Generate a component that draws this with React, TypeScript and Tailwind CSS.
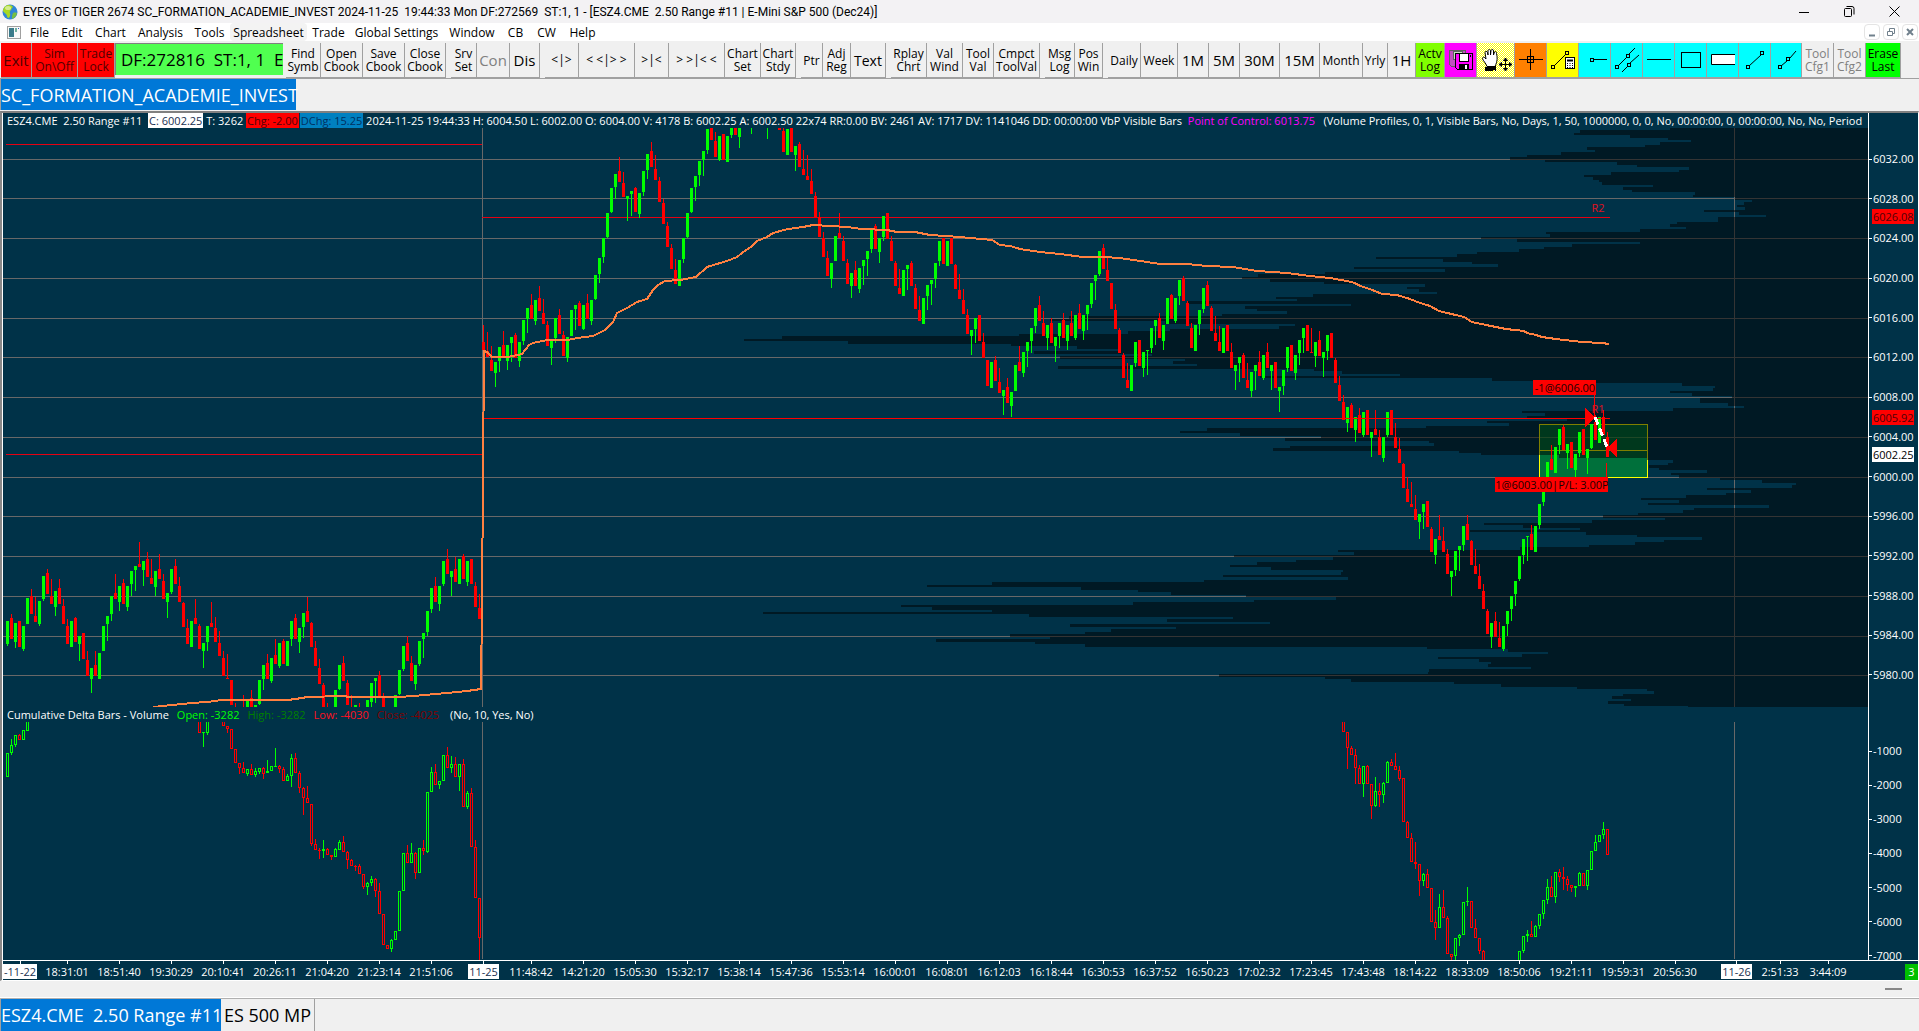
import React from "react";

const SERIES_A =
  "372,303 293,356 365,309 303,380 387,318 312,234 228,282 288,305 312,243 237,168 160,221 228,251 261,213 204,251 258,312 318,372 380,303 294,365 372,348 339,416 " +
  "420,467 476,444 435,467 476,399 392,318 312,288 282,228 219,237 245,198 189,251 261,198 192,153 151,138 132,141 150,123 117,171 174,192 200,153 147,177 183,237 " +
  "245,219 216,147 138,192 198,245 249,321 324,372 380,303 294,312 318,386 392,369 366,318 309,321 324,366 369,407 414,467 474,477 480,555 570,624 - 580,600 " +
  "600,540 534,585 600,555 552,480 477,435 429,477 483,414 405,432 438,369 363,432 438,363 357,303 294,357 366,324 321,279 273,305 309,380 384,437 444,492 494,565 " +
  "570,624 - 570,510 507,435 429,483 489,555 575,600 600,555 570,624 - 600,540 545,489 483,474 465,528 528,594 - - 590,525 521,450 447,378 " +
  "369,423 429,483 492,435 432,363 357,339 336,273 267,204 198,245 252,198 192,123 117,161 171,153 147,186 192,117 108,177 186,123 117,192 198,261 264,297";

const SERIES_B =
  "696,720 723,742 750,783 789,756 753,711 705,738 753,705 699,681 675,743 753,696 693,630 627,594 585,626 633,570 564,603 609,642 645,708 714,690 684,624 615,672 " +
  "675,738 744,681 678,600 597,585 579,648 657,585 579,627 633,570 567,495 492,444 441,384 381,309 306,234 231,192 183,216 219,261 267,258 252,243 234,306 312,249 " +
  "246,183 180,132 123,171 177,210 213,276 279,342 348,411 414,477 480,522 528,450 447,384 381,309 306,234 231,198 195,153 150,123 120,57 45,90 93,141 150,78 " +
  "72,150 156,78 75,10 30,75 81,40 - - 40,-3 - - - 45,12 - - 40,60 63,126 135,57 50,126 135,108 102,171 " +
  "177,195 198,210 213,252 258,321 321,381 384,441 444,498 507,459 453,378 369,384 393,453 459,522 528,489 480,528 537,474 468,450 447,423 417,354 348,417 426,384 " +
  "381,318 309,387 393,453 459,528 534,552 558,480 477,465 459,528 534,597 600,633 642,564 558,525 522,510 507,459 453,393 384,462 468,393 384,462 465,537 540,567";

const SERIES_C =
  "570,612 615,672 678,660 657,624 615,693 696,744 750,828 834,756 750,813 816,849 858,840 831,879 888,846 843,765 756,783 789,726 723,696 693,654 648,594 585,633 " +
  "639,678 684,645 639,699 708,681 678,639 630,684 693,645 639,678 684,615 609,657 663,615 612,585 582,519 513,495 492,423 414,477 480,513 519,597 600,657 660,729 " +
  "735,804 810,834 843,765 759,696 690,768 774,726 723,720 714,654 648,630 624,684 693,645 642,564 555,627 633,564 558,510 504,573 579,648 654,714 723,645 642,600 " +
  "597,534 525,588 594,663 669,693 696,723 729,654 645,723 726,774 783,765 759,741 735,804 810,834 843,786 783,765 756,798 804,735 726,774 783,765 756,834 843,831 " +
  "828,780 774,711 705,783 789,735 729,690 684,654 645,723 726,729 738,696 690,738 744,726 723,675 669,744 750,819 825,873 876,930";

const SERIES_D =
  "39,-9 -15,54 60,21 15,69 75,6 0,75 84,66 57,75 81,135 144,81 75,6 0,75 81,114 117,159 162,234 237,276 282,291 297,330 336,312 306,282 " +
  "273,351 357,426 435,387 378,390 393,426 432,492 501,483 480,423 420,408 405,348 342,390 393,465 468,492 498,537 543,597 603,672 681,639 633,681 684,711 717,648 " +
  "642,603 597,558 552,513 507,438 435,387 381,378 372,420 426,348 345,282 276,213 210,156 147,180 189,111 105,57 51,120 129,102 96,174 180,132 129,66 57,135 " +
  "144,117 114,42 36,90 99,21 21,75 81,141";

type Segment = { start: number; y0: number; data: string };

const PRICE: Segment[] = [
  { start: 0, y0: 520, data: SERIES_A },
  { start: 119, y0: 110, data: SERIES_B },
  { start: 239, y0: 110, data: SERIES_C },
  { start: 335, y0: 410, data: SERIES_D },
];

/* Each delta bar: colour, then high,top,bottom,low (or only top,bottom). */
const DELTA: Segment[] = [
  {
    start: 0,
    y0: 520,
    data:
      "g700,772 g657,676,700,706 g646,646,676,682 r642,646,661,661 g631,661 g590,632 " +
      "- - - - - - - - - - - - - - - - - - - - - - - - - - - - - - - - - - - - - - - - - - " +
      "r590,640 g636,636,640,681 g600,600,638,644 g590,607 - - r590,619 r619,619,628,640 r628,688 r688,730 r730,730,745,762 r726,745,760,760 " +
      "g748,748,762,768 r732,748,766,766 g744,754,766,770 g745,745,756,763 r740,745,762,776 g720,753,760,760 g738,754 g684,738,740,740 r735,739,748,758 r742,748,784,784 " +
      "g762,768,784,784 g702,714,769,801 r699,714,760,760 r754,760,804,818 r800,804,835,885 r798,835,850,850 r853,853,973,978 r957,973,991,991 r984,991,994,1017 g960,988,994,1014 " +
      "r984,988,1006,1006 r1006,1006,1010,1020 g984,988,1010,1010 g960,966,989,989 r948,966,997,997 r992,997,1021,1047 r1017,1021,1039,1039 r1035,1038,1041,1053 r1032,1039,1063,1063 r1063,1063,1100,1106 " +
      "g1087,1090,1100,1124 g1068,1077,1090,1098 r1074,1078,1114,1130 r1089,1114,1183,1183 r1183,1276 r1276,1276,1286,1288 g1256,1261,1286,1295 g1234,1261 g1114,1234 g1000,1114 " +
      "r975,1000,1030,1030 g969,1000,1030,1030 r996,1000,1058,1077 g985,1058 r960,985,994,1004 g817,817,995,999 g741,757,817,817 r732,757,796,796 g784,784,796,807 g706,784 " +
      "r681,706,745,745 g708,733,745,759 r711,733,772,772 g733,733,772,812 r717,733,862,862 g813,820,862,867 r804,820,982,982 r960,982,1135,1135 r1135,1135,1255,1330",
  },
  {
    start: 334,
    y0: 700,
    data:
      "r60,97 r97,97,145,207 r138,145,166,166 r147,166,205,252 r195,205,253,253 g199,199,253,291 r195,199,253,253 r253,253,317,357 g231,274,317,321 r249,274,284,321 " +
      "g246,250,284,308 g183,187,250,250 r177,187,199,199 r159,199,211,211 r198,211,236,242 r235,367 r363,367,415,415 r399,415,487,487 r426,487,493,507 r493,493,544,588 " +
      "g519,523,544,558 r507,523,565,565 r565,667 r630,667,685,720 g582,622,685,685 r570,622,655,655 r648,655,763,763 r763,763,770,780 g715,715,769,780 g702,706,715,738 " +
      "g607,706 g561,604,607,618 r604,685 r657,685,715,715 r715,715,754,762 r750,754,790,790 - - - - - - - - " +
      "g754,790 g709,709,754,758 g690,703,709,726 r663,703,712,712 g675,679,712,712 g643,643,679,687 g601,601,643,657 g537,562,601,612 r528,562,590,590 g517,517,590,609 " +
      "r507,517,532,545 r501,532,538,570 r528,538,556,573 r556,556,565,576 g559,559,565,591 g516,520,559,559 r520,559 g511,511,559,570 g454,511 g405,427,454,454 " +
      "g406,427 g366,388,406,417 r388,466",
  },
];

/* Volume profile edge: "y,x" steps in local units of each group. */
const PROFILE = [
  {
    x0: 1439,
    y0: 110,
    sx: 3,
    data:
      "54,692 60,423 69,405 75,573 84,687 90,756 96,663 105,618 111,444 120,468 126,366 135,264 141,213 150,318 156,534 165,594 171,750 180,720 186,516 195,435 201,462 210,480 216,489 225,642 231,552 240,579 246,768 255,762 261,888 270,939 276,915 285,894 291,918 300,795 306,900 315,981 321,837 336,714 342,693 351,741 357,603 366,321 372,333 381,126 387,234 396,603 402,399 411,315 417,240 426,114 432,54 441,-189 447,12 456,99 462,177 471,-255 477,18 486,-342 492,-543 501,-591 507,-507 516,-345 522,-42 531,-96 537,-60 546,-6 552,-377 561,-489 567,-426 573,-753 582,-264 588,-582 597,-546 603,-456 612,-651 618,-1110 627,-1167 633,-822 642,-432 648,-480 657,-807 663,-933 672,-1260 678,-1971 687,-2085 693,-1773 702,-1284 708,-1086 717,-963 723,-1215 732,-861 738,-1137 747,-762 753,-798 762,-726 768,-1143 777,-375 783,-291 792,-117 798,-537 804,159 813,330 819,729 828,828 834,822 843,693 849,759 858,879 864,783 879,867 888,915 894,702 903,249 909,318 918,264 927,384 933,144 939,210",
  },
  {
    x0: 1140,
    y0: 410,
    sx: 3,
    data: "48,858 54,201 63,120 69,300 78,543 84,435 93,867 99,882 108,450 114,399 123,957 129,1023 135,1257",
  },
  {
    x0: 1300,
    y0: 380,
    sx: 2.528,
    data:
      "234,876 240,942 249,930 255,882 264,907 270,1028 279,937 285,958 294,1061 300,1168 309,1254 315,1244 324,1028 330,1140 339,1077 345,975 354,861 360,958 369,880 375,1185 384,996 390,968 399,854 405,765 414,922 420,737 429,464 435,565 444,707 450,431 456,724 465,851 471,1016 480,920 486,846 495,730 501,555 510,96 516,137",
  },
  {
    x0: 740,
    y0: 500,
    sx: 2.613,
    data:
      "165,1291 171,1550 180,1453 186,1351 195,1281 201,1388 210,1576 216,1570 225,1262 231,1589 240,1213 246,659 255,489 261,891 270,1040 276,1126 285,1322 291,1558 300,1343 306,1027 315,421 321,502 330,659 336,60 342,755 351,1288 357,1116 366,1385 372,862 381,1139 387,970 396,902 402,706 411,810 417,512 426,771 432,902",
  },
  {
    x0: 1300,
    y0: 380,
    sx: 2.528,
    data:
      "801,322 807,527 816,626 822,560 831,350 837,453 846,484 852,476 861,585 867,327 876,324 882,-205 891,63 897,129 906,390 912,509 921,699 927,876 933,894 942,816 948,788 957,836 963,778 972,818 978,980",
  },
];

const AVERAGE = [
  { x0: 0, y0: 520, data: "460,560 515,554 575,549 620,546 665,541 690,540 865,540 905,534 920,531 1030,528 1050,531 1200,530 1275,525 1340,518 1400,513 1442,508 1445,250" },
  { x0: 480, y0: 110, data: "11,722 22,726 36,740 85,740 125,733 146,706 160,699 185,692 205,690 265,690 290,685 338,677 375,661 398,637 410,610 440,593 470,577 500,568 518,540 535,525 555,513 600,509 648,500 680,470 740,453 770,442 785,428 815,408 830,394 860,381 880,370 925,358 970,350 1000,346 1050,348 1100,351 1145,358 1220,360 1250,365 1305,367 1350,375" },
  { x0: 960, y0: 110, data: "0,381 95,390 120,404 150,409 180,417 240,425 300,432 370,440 430,440 480,445 560,457 600,461 680,463 740,468 820,472 890,482 980,490 1050,499 1110,504 1175,516 1210,530 1230,536 1265,551 1310,555 1350,566 1380,580 1410,588" },
  { x0: 1439, y0: 110, data: "0,603 75,621 100,635 140,644 200,656 255,663 265,670 290,674 310,682 350,687 430,695 490,699 510,702" },
];

const barX = (i: number) => 7 + 4 * i;
const nums = (s: string) => s.split(",").map(Number);

const profileSteps = PROFILE.flatMap((g) =>
  g.data.split(" ").map((t) => {
    const [y, x] = nums(t);
    return [Math.round(g.x0 + x / g.sx), Math.round(g.y0 + y / 3)];
  })
);
const profilePath =
  `M1868 ${profileSteps[0][1]}` +
  profileSteps
    .map(([x, y], i) => {
      const next = profileSteps[i + 1];
      return `L${x} ${y}V${next ? next[1] : 707}`;
    })
    .join("") +
  "H1868Z";

const averagePoints = AVERAGE.flatMap((g) =>
  g.data.split(" ").map((t) => {
    const [x, y] = nums(t);
    return `${Math.round(g.x0 + x / 3)},${Math.round(g.y0 + y / 3)}`;
  })
).join(" ");

const GRID = [159, 198, 238, 278, 318, 357, 397, 437, 477, 516, 556, 596, 636, 675];
const RANGE_HEIGHT = 25;

function PriceBars() {
  return (
    <g>
      {PRICE.flatMap((seg) =>
        seg.data.split(" ").map((t, k) => {
          if (t === "-") return null;
          const [o, c] = nums(t);
          const i = seg.start + k;
          const up = o > c;
          const yo = Math.round(seg.y0 + o / 3);
          const yc = Math.round(seg.y0 + c / 3);
          const top = Math.min(yo, yc);
          const wickTop = up ? yc : yc - RANGE_HEIGHT;
          return (
            <g key={i} fill={up ? "#00ff00" : "#ff0000"}>
              <rect x={barX(i)} y={wickTop} width={1} height={RANGE_HEIGHT} />
              <rect x={barX(i) - 1} y={top} width={3} height={Math.max(1, Math.abs(yo - yc))} />
            </g>
          );
        })
      )}
    </g>
  );
}

function DeltaBars() {
  return (
    <g>
      {DELTA.flatMap((seg) =>
        seg.data.split(" ").map((t, k) => {
          if (t === "-") return null;
          const v = nums(t.slice(1)).map((n) => Math.round(seg.y0 + n / 3));
          const [h, a, b, l] = v.length === 2 ? [v[0], v[0], v[1], v[1]] : v;
          const i = seg.start + k;
          const x = barX(i);
          return (
            <g key={i} fill={t[0] === "g" ? "#00ff00" : "#ff0000"}>
              <rect x={x} y={h} width={1} height={l - h} />
              <rect x={x - 1} y={a} width={3} height={Math.max(1, b - a)} />
              {b - a > 2 && <rect x={x} y={a + 1} width={1} height={b - a - 2} fill="#003248" />}
            </g>
          );
        })
      )}
    </g>
  );
}

function PricePlot() {
  return (
    <svg className="block h-[579px] w-full" viewBox="3 128 1865 579" preserveAspectRatio="none" shapeRendering="crispEdges">
      <g fill="#686868">
        {GRID.map((y) => (
          <rect key={y} x={3} y={y} width={1865} height={1} />
        ))}
        <rect x={482} y={128} width={1} height={579} />
        <rect x={1734} y={128} width={1} height={579} />
      </g>
      <rect x={1539} y={424} width={109} height={53} fill="#00cc28" fillOpacity={0.4} />
      <path d="M1539.5 424.5H1647.5V477.5H1539.5ZM1539.5 450.5H1647" fill="none" stroke="#ffff00" />
      <path d={profilePath} fill="#000000" fillOpacity={0.5} />
      <rect x={6} y={144} width={476} height={1} fill="#e60012" />
      <rect x={6} y={454} width={476} height={1} fill="#e60012" />
      <rect x={482} y={217} width={1128} height={1} fill="#e60012" />
      <PriceBars />
      <rect x={482} y={418} width={1128} height={1} fill="#ff0000" />
      <polyline points={averagePoints} fill="none" stroke="#ff8040" strokeWidth={2} />
      <g fill="#ff0000">
        <rect x={1594} y={395} width={1} height={22} />
        <rect x={1606} y={463} width={1} height={14} />
        <rect x={1533} y={380} width={63} height={15} />
        <rect x={1495} y={477} width={113} height={15} />
        <path d="M1585 408V427L1595 418ZM1617 438V457L1607 448Z" />
      </g>
      <path d="M1595 417L1607 447" stroke="#ffffff" strokeWidth={3} strokeDasharray="8 4" />
      <g fontSize={11} textAnchor="middle">
        <text x={1565} y={392} fill="#1a0000">-1@6006.00</text>
        <text x={1552} y={489} fill="#1a0000">1@6003.00|P/L: 3.00P</text>
        <text x={1598} y={212} fill="#e01020">R2</text>
        <text x={1598} y={413} fill="#e01020">R1</text>
      </g>
    </svg>
  );
}

function DeltaPlot() {
  return (
    <svg className="block h-[238px] w-full" viewBox="3 722 1865 238" preserveAspectRatio="none" shapeRendering="crispEdges">
      <rect x={482} y={722} width={1} height={237} fill="#686868" />
      <rect x={1734} y={722} width={1} height={237} fill="#686868" />
      <DeltaBars />
    </svg>
  );
}

const PRICES = ["6032.00", "6028.00", "6024.00", "6020.00", "6016.00", "6012.00", "6008.00", "6004.00", "6000.00", "5996.00", "5992.00", "5988.00", "5984.00", "5980.00"];
const DELTAS = ["-1000", "-2000", "-3000", "-4000", "-5000", "-6000", "-7000"];

function AxisLabel({ text }: { text: string }) {
  return (
    <div className="flex items-center gap-px leading-4">
      <span className="h-px w-[3px] bg-white" />
      {text}
    </div>
  );
}

function ValueAxis() {
  return (
    <div className="relative w-[50px] shrink-0 overflow-hidden border-l border-white pt-[38px]">
      <div className="flex h-[532px] flex-col justify-between">
        {PRICES.map((p) => (
          <AxisLabel key={p} text={p} />
        ))}
      </div>
      <div className="mt-[60px] flex h-[221px] flex-col justify-between">
        {DELTAS.map((p) => (
          <AxisLabel key={p} text={p} />
        ))}
      </div>
      <span className="absolute top-[96px] left-[3px] w-[42px] bg-[#ff0000] pl-px leading-[15px] text-[#500008]">6026.08</span>
      <span className="absolute top-[297px] left-[3px] w-[42px] bg-[#ff0000] pl-px leading-[15px] text-[#500008]">6005.92</span>
      <span className="absolute top-[334px] left-[3px] w-[42px] bg-white pl-px leading-[15px] text-black">6002.25</span>
    </div>
  );
}

const TIMES_1 = ["18:31:01", "18:51:40", "19:30:29", "20:10:41", "20:26:11", "21:04:20", "21:23:14", "21:51:06"];
const TIMES_2 = ["11:48:42", "14:21:20", "15:05:30", "15:32:17", "15:38:14", "15:47:36", "15:53:14", "16:00:01", "16:08:01", "16:12:03", "16:18:44", "16:30:53", "16:37:52", "16:50:23", "17:02:32", "17:23:45", "17:43:48", "18:14:22", "18:33:09", "18:50:06", "19:21:11", "19:59:31", "20:56:30"];
const TIMES_3 = ["2:51:33", "3:44:09"];

function TimeLabel({ text, w }: { text: string; w: string }) {
  return (
    <div className={`flex shrink-0 flex-col items-center ${w}`}>
      <span className="h-[3px] w-px bg-white" />
      <span className="leading-4">{text}</span>
    </div>
  );
}

function DateLabel({ text, cls }: { text: string; cls: string }) {
  return (
    <div className={`flex shrink-0 flex-col items-center ${cls}`}>
      <span className="h-[3px] w-px bg-white" />
      <span className="w-full bg-white text-center leading-[15px] text-[#203050]">{text}</span>
    </div>
  );
}

function TimeAxis() {
  return (
    <div className="flex h-5 overflow-hidden border-t border-white">
      <DateLabel text="-11-22" cls="w-[34px]" />
      <div className="ml-1 flex">
        {TIMES_1.map((t) => (
          <TimeLabel key={t} text={t} w="w-[52px]" />
        ))}
      </div>
      <DateLabel text="11-25" cls="ml-[11px] w-[31px]" />
      <div className="ml-[6px] flex">
        {TIMES_2.map((t) => (
          <TimeLabel key={t} text={t} w="w-[52px]" />
        ))}
      </div>
      <DateLabel text="11-26" cls="ml-5 w-[31px]" />
      <div className="ml-1 flex">
        {TIMES_3.map((t) => (
          <TimeLabel key={t} text={t} w="w-12" />
        ))}
      </div>
      <span className="mt-[3px] ml-auto w-[13px] bg-[#00c000] text-center leading-[15px]">3</span>
    </div>
  );
}

/* ---------- toolbar ---------- */

const node = (x: number, y: number) => <rect x={x - 1.5} y={y - 1.5} width={3} height={3} stroke="#000" />;

function SaveIcon() {
  return (
    <svg width={31} height={34} shapeRendering="crispEdges">
      <path d="M4.500 7.500H20.500V23.500H6.500L4.500 21.500Z" fill="#c050c0" stroke="#606060" />
      <rect x={8} y={8} width={9} height={8} fill="#c8e0c8" stroke="#606060" />
      <path d="M10.500 10.500H27.500V26.500H12.500L10.500 24.500Z" fill="#ff00ff" stroke="#000" />
      <rect x={14.500} y={10.500} width={9} height={8} fill="#fff" stroke="#000" />
      <rect x={14} y={21} width={10} height={6} fill="#000" />
      <rect x={20} y={22} width={2} height={4} fill="#fff" />
      <rect x={25} y={12} width={1} height={2} fill="#000" />
    </svg>
  );
}

function HandIcon() {
  return (
    <svg width={37} height={34} shapeRendering="crispEdges">
      <defs>
        <pattern id="dither" width={2} height={2} patternUnits="userSpaceOnUse">
          <rect width={2} height={2} fill="#ffff00" />
          <rect width={1} height={1} fill="#ffffff" />
          <rect x={1} y={1} width={1} height={1} fill="#ffffff" />
        </pattern>
      </defs>
      <rect width={37} height={34} fill="url(#dither)" />
      <path
        d="M10 23.500C9 20 6 18 5.500 15.500C5.500 14 7 13.500 8 15L9 16L8 9.500C8 8 10 8 10.500 9.500L11 12V8C11 6 13.500 6 13.500 8V12L14 7.500C14.500 6 16.500 6 16.500 8V12L17.500 9C18.500 8 20 9 19.500 10.500C20.500 15 20.500 18 18 23.500Z"
        fill="#fff"
        stroke="#000"
        shapeRendering="auto"
      />
      <path d="M8 24L11 23H18L19 24V28L17 27L14 28H8Z" fill="#000" />
      <path d="M28.500 15V27M22.500 21.500H34.500M28.500 15L26.500 17.500H30.500ZM28.500 28L26.500 25.500H30.500ZM22 21.500L24.500 19.500V23.500ZM35 21.500L32.500 19.500V23.500Z" fill="#ffff80" stroke="#000" shapeRendering="auto" />
    </svg>
  );
}

function CrossIcon() {
  return (
    <svg width={31} height={34} shapeRendering="crispEdges" fill="none" stroke="#000">
      <path d="M4 16.500H28M15.500 6V27" strokeWidth={1} />
      <rect x={12.500} y={13.500} width={6} height={6} />
    </svg>
  );
}

function CalcIcon() {
  return (
    <svg width={31} height={34} stroke="#000" fill="none">
      <path d="M7 23L19 11" />
      {node(6, 24)}
      {node(20, 10)}
      <rect x={18.500} y={14.500} width={9} height={11} fill="#fff" />
      <path d="M20 17.500H26" strokeWidth={2} />
      <path d="M20.500 20V25M23 20V25M25.500 20V25" strokeDasharray="1 1" />
    </svg>
  );
}

const DrawIcon = ({ children }: { children: React.ReactNode }) => (
  <svg width={31} height={34} stroke="#000" fill="none">
    {children}
  </svg>
);

type Tool = { label: React.ReactNode; name?: string; cls: string };

const big = "text-[15px]";
const small = "text-[12px] leading-[13px]";
const arrows = "text-[12px]";
const two = (a: string, b: string) => (
  <span>
    {a}
    <br />
    {b}
  </span>
);

const GROUPS: Tool[][] = [
  [
    { label: "Exit", cls: "w-[31px] bg-[#ff0000] text-[#500000] " + big },
    { label: two("Sim", "On\\Off"), cls: "w-[46px] bg-[#ff0000] text-[#500000] " + small },
    { label: two("Trade", "Lock"), cls: "w-[37px] bg-[#ff0000] text-[#500000] " + small },
  ],
  [
    { label: two("Find", "Symb"), cls: "w-[35px] " + small },
    { label: two("Open", "Cbook"), cls: "w-[42px] " + small },
    { label: two("Save", "Cbook"), cls: "w-[42px] " + small },
    { label: two("Close", "Cbook"), cls: "w-[41px] " + small },
  ],
  [
    { label: two("Srv", "Set"), cls: "w-[26px] " + small },
    { label: "Con", cls: "w-[33px] text-[#808080] " + big },
    { label: "Dis", cls: "w-[30px] " + big },
  ],
  [
    { label: "<|>", cls: "w-[34px] " + arrows },
    { label: "< <|> >", cls: "w-[56px] " + arrows },
    { label: ">|<", cls: "w-[34px] " + arrows },
    { label: "> >|< <", cls: "w-[56px] " + arrows },
    { label: two("Chart", "Set"), cls: "w-[36px] " + small },
    { label: two("Chart", "Stdy"), cls: "w-[35px] " + small },
  ],
  [
    { label: "Ptr", cls: "w-[22px] " + small },
    { label: two("Adj", "Reg"), cls: "w-[28px] " + small },
    { label: "Text", cls: "w-[35px] text-[14px]" },
  ],
  [
    { label: two("Rplay", "Chrt"), cls: "w-[36px] " + small },
    { label: two("Val", "Wind"), cls: "w-[36px] " + small },
    { label: two("Tool", "Val"), cls: "w-[31px] " + small },
    { label: two("Cmpct", "ToolVal"), cls: "w-[46px] " + small },
  ],
  [
    { label: two("Msg", "Log"), cls: "w-[30px] " + small },
    { label: two("Pos", "Win"), cls: "w-[28px] " + small },
  ],
  [
    { label: "Daily", cls: "w-[33px] " + small },
    { label: "Week", cls: "w-[37px] " + small },
    { label: "1M", cls: "w-[31px] " + big },
    { label: "5M", cls: "w-[31px] " + big },
    { label: "30M", cls: "w-[40px] " + big },
    { label: "15M", cls: "w-[40px] " + big },
    { label: "Month", cls: "w-[43px] " + small },
    { label: "Yrly", cls: "w-[25px] " + small },
    { label: "1H", cls: "w-[28px] " + big },
    { label: two("Actv", "Log"), cls: "w-[29px] bg-[#80ff00] " + small },
    { label: <SaveIcon />, name: "Save all", cls: "w-8 bg-[#ff00ff]" },
    { label: <HandIcon />, name: "Pan", cls: "w-[38px] bg-white" },
    { label: <CrossIcon />, name: "Crosshair", cls: "w-8 bg-[#ff8000]" },
    { label: <CalcIcon />, name: "Calculator", cls: "w-8 bg-[#ffff00]" },
    { label: <DrawIcon>{node(13, 17)}<path d="M15 16.500H28" /></DrawIcon>, name: "Ray", cls: "w-8 bg-[#00ffff]" },
    { label: <DrawIcon><path d="M8 22L16 14M18 11L24 5M11 29L17 23M19 20L28 12" />{node(6, 24)}{node(17, 13)}{node(18, 22)}</DrawIcon>, name: "Parallel lines", cls: "w-8 bg-[#00ffff]" },
    { label: <DrawIcon><path d="M4 16.500H28" /></DrawIcon>, name: "Horizontal line", cls: "w-8 bg-[#00ffff]" },
    { label: <DrawIcon><rect x={6.500} y={9.500} width={19} height={15} /></DrawIcon>, name: "Rectangle", cls: "w-8 bg-[#00ffff]" },
    { label: <DrawIcon><path d="M28 11.500H4.500V21.500H28" fill="#fff" /></DrawIcon>, name: "Extending rectangle", cls: "w-8 bg-[#00ffff]" },
    { label: <DrawIcon><path d="M10 23L22 12" />{node(9, 24)}{node(23, 10)}</DrawIcon>, name: "Line", cls: "w-8 bg-[#00ffff]" },
    { label: <DrawIcon><path d="M10 23L16 18M19 15L25 8" />{node(9, 24)}{node(17, 16)}</DrawIcon>, name: "Extended line", cls: "w-[31px] bg-[#00ffff]" },
    { label: two("Tool", "Cfg1"), cls: "w-8 text-[#808080] " + small },
    { label: two("Tool", "Cfg2"), cls: "w-8 text-[#808080] " + small },
    { label: two("Erase", "Last"), cls: "w-[35px] bg-[#00ff00] " + small },
  ],
];

function ToolGroup({ items }: { items: Tool[] }) {
  return (
    <div className="flex shrink-0">
      {items.map((t, i) => (
        <button
          key={i}
          type="button"
          aria-label={t.name}
          className={`flex h-[35px] items-center justify-center overflow-hidden border-r border-b border-[#a0a0a0] text-center whitespace-nowrap ${t.cls}`}
        >
          {t.label}
        </button>
      ))}
    </div>
  );
}

function Toolbar() {
  return (
    <div className="flex h-[37px] items-start gap-[5px] overflow-hidden pt-[2px] pl-px">
      <div className="flex shrink-0">
        <ToolGroup items={GROUPS[0]} />
        <input
          readOnly
          aria-label="Data feed status"
          value="DF:272816  ST:1, 1  E"
          className="-mr-[2px] h-8 w-[168px] border-t border-l border-[#808080] bg-[#50ff50] pl-[5px] text-[17px] text-black outline-none"
        />
      </div>
      {GROUPS.slice(1).map((g, i) => (
        <ToolGroup key={i} items={g} />
      ))}
    </div>
  );
}

const MENUS: [string, string][] = [
  ["File", "w-[31px]"],
  ["Edit", "w-[34px]"],
  ["Chart", "w-[43px]"],
  ["Analysis", "w-[57px]"],
  ["Tools", "w-[41px]"],
  ["Spreadsheet", "w-[77px] rounded bg-[#f3f3f3]"],
  ["Trade", "w-[43px]"],
  ["Global Settings", "w-[93px]"],
  ["Window", "w-[58px]"],
  ["CB", "w-[29px]"],
  ["CW", "w-[33px]"],
  ["Help", "w-[39px]"],
];

function TitleBar() {
  return (
    <header className="flex h-[23px] items-center bg-[#f3f2f4] pr-[19px] pl-[2px]">
      <svg width={16} height={16} viewBox="0 0 16 16">
        <circle cx={8} cy={8} r={7.500} fill="#2f86d6" />
        <path d="M3 2.500C6 0 10 1 11 3C9 4 10 6 8 7C7 9 9 10 8 12C7 15 5 14 5 12C5 10 2 9 1 7C1 5 2 3.500 3 2.500Z" fill="#a8d820" />
        <path d="M11 9C13 8 15 9 15 9C14.500 12 12 14.500 10 15C10 13 10 11 11 9Z" fill="#78c040" />
        <ellipse cx={6} cy={4} rx={3} ry={2} fill="#fff" fillOpacity={0.5} />
      </svg>
      <h1 className="ml-[5px] font-['Roboto','Open_Sans',sans-serif] text-[12px] whitespace-pre">
        {"EYES OF TIGER 2674 SC_FORMATION_ACADEMIE_INVEST 2024-11-25  19:44:33 Mon DF:272569  ST:1, 1 - [ESZ4.CME  2.50 Range #11 | E-Mini S&P 500 (Dec24)]"}
      </h1>
      <div className="ml-auto flex gap-[34px]">
        <button type="button" aria-label="Minimize">
          <svg width={11} height={11} stroke="#000" fill="none"><path d="M0 6.500H10" /></svg>
        </button>
        <button type="button" aria-label="Restore">
          <svg width={11} height={11} stroke="#000" fill="none"><rect x={0.500} y={2.500} width={7} height={8} rx={1} /><path d="M2.500 0.500H8Q10 0.500 10 2.500V8.500" /></svg>
        </button>
        <button type="button" aria-label="Close">
          <svg width={11} height={11} stroke="#000" fill="none"><path d="M0.500 0.500L10.500 10.500M10.500 0.500L0.500 10.500" /></svg>
        </button>
      </div>
    </header>
  );
}

function MenuBar() {
  return (
    <nav className="flex h-[18px] items-center bg-white pl-[7px]">
      <svg width={14} height={13} shapeRendering="crispEdges">
        <rect x={0.500} y={0.500} width={13} height={12} fill="#f8f8f8" stroke="#a0a0a0" />
        <rect x={2} y={2} width={5} height={9} fill="#3a7a8a" />
        <rect x={8} y={2} width={2} height={4} fill="#70b0a0" />
        <rect x={11} y={2} width={1} height={1} fill="#3060c0" />
      </svg>
      <div className="ml-[3px] flex">
        {MENUS.map(([m, w]) => (
          <button key={m} type="button" className={`h-[18px] pt-px text-center text-[12px] leading-[18px] whitespace-nowrap ${w}`}>
            {m}
          </button>
        ))}
      </div>
      <div className="ml-auto flex gap-[3px] pr-px">
        {["M4 11.500H10", "M3.500 7.500H8.500V11.500H3.500ZM5.500 7V4.500H10.500V9.500H9", "M4 5L10 11M10 5L4 11"].map((d, i) => (
          <button key={d} type="button" aria-label={["Minimize chart", "Restore chart", "Close chart"][i]} className="flex size-4 items-center justify-center rounded-sm border border-[#e4e4e4]">
            <svg className="shrink-0" width={14} height={16} stroke="#70808c" fill="none" strokeWidth={i === 1 ? 1 : 2}><path d={d} /></svg>
          </button>
        ))}
      </div>
    </nav>
  );
}

export default function App() {
  return (
    <div className="flex min-h-screen flex-col overflow-hidden bg-[#f0f0f0] font-['Open_Sans','Noto_Sans',sans-serif] text-black">
      <TitleBar />
      <MenuBar />
      <Toolbar />
      <div className="flex h-[33px] items-end border-t border-[#a0a0a0] pb-px">
        <button type="button" className="h-[31px] w-[296px] border-l border-[#a0a0a0] bg-[#0078d7] pt-px text-center text-[18px] leading-[30px] whitespace-nowrap text-white">
          SC_FORMATION_ACADEMIE_INVEST
        </button>
      </div>
      <main className="border-t-2 border-r border-b border-l-2 border-t-[#808080] border-r-white border-b-white border-l-[#888888]">
        <div className="border-l border-white bg-[#003248] text-[11px] text-white">
          <div className="flex">
            <div className="min-w-0 flex-1">
              <div className="flex h-[15px] overflow-hidden pl-1 leading-[15px] whitespace-pre">
                <span>{"ESZ4.CME  2.50 Range #11 "}</span>
                <span className="ml-[3px] bg-white px-px text-[#203050]">C: 6002.25</span>
                <span>{" T: 3262 "}</span>
                <span className="bg-[#ff0000] px-px text-[#500008]">Chg: -2.00</span>
                <span className="ml-px bg-[#0080c0] px-px text-[#003060]">DChg: 15.25</span>
                <span>{" 2024-11-25 19:44:33 H: 6004.50 L: 6002.00 O: 6004.00 V: 4178 B: 6002.25 A: 6002.50 22x74 RR:0.00 BV: 2461 AV: 1717 DV: 1141046 DD: 00:00:00 VbP Visible Bars  "}</span>
                <span className="text-[#ff00ff]">Point of Control: 6013.75</span>
                <span>{"   (Volume Profiles, 0, 1, Visible Bars, No, Days, 1, 50, 1000000, 0, 0, No, 00:00:00, 0, 00:00:00, No, No, Period"}</span>
              </div>
              <PricePlot />
              <div className="flex h-[15px] gap-2 overflow-hidden pl-1 leading-[15px] whitespace-pre">
                <span>Cumulative Delta Bars - Volume</span>
                <span className="text-[#00ff00]">Open: -3282</span>
                <span className="text-[#008000]">High: -3282</span>
                <span className="text-[#ff1020]">Low: -4030</span>
                <span className="text-[#800000]">Close: -4025</span>
                <span className="pl-[3px]">(No, 10, Yes, No)</span>
              </div>
              <DeltaPlot />
            </div>
            <div className="flex h-[847px]">
              <ValueAxis />
            </div>
          </div>
          <TimeAxis />
        </div>
      </main>
      <div className="flex h-[17px] items-center justify-end border-b border-white pr-[17px]">
        <span className="h-[2px] w-[17px] bg-[#888888]" />
      </div>
      <footer className="flex flex-1 items-stretch border-t border-[#b0b0b0] text-[18px] whitespace-pre">
        <button type="button" className="w-[221px] border-l border-[#a0a0a0] bg-[#0078d7] text-center text-white">{"ESZ4.CME  2.50 Range #11"}</button>
        <button type="button" className="w-[94px] border-r border-[#a0a0a0] text-center">ES 500 MP</button>
      </footer>
    </div>
  );
}
